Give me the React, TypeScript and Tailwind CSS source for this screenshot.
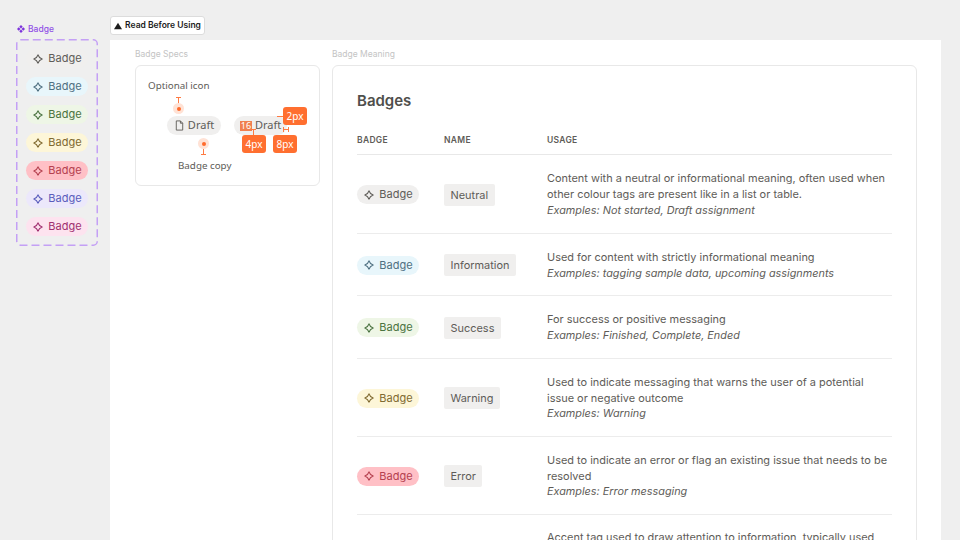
import React from "react";

type Tone = "neutral" | "info" | "success" | "warning" | "error" | "accent" | "pink";

const tones: Record<Tone, string> = {
    neutral: "bg-[#f0efee] text-[#5e5c58]",
    info: "bg-[#e8f6fb] text-[#4f7081]",
    success: "bg-[#eef6e6] text-[#4a7340]",
    warning: "bg-[#fdf6d8] text-[#806a30]",
    error: "bg-[#ffc0c6] text-[#b5404f]",
    accent: "bg-[#ece8fb] text-[#5a5dbc]",
    pink: "bg-[#fde3ef] text-[#a03070]",
};

const swatches: Tone[] = ["neutral", "info", "success", "warning", "error", "accent", "pink"];

const rows: { tone: Tone; name: string; usage: string[]; example: string; h: string }[] = [
    {
        tone: "neutral",
        name: "Neutral",
        usage: ["Content with a neutral or informational meaning, often used when", "other colour tags are present like in a list or table."],
        example: "Examples: Not started, Draft assignment",
        h: "h-[79px]",
    },
    {
        tone: "info",
        name: "Information",
        usage: ["Used for content with strictly informational meaning"],
        example: "Examples: tagging sample data, upcoming assignments",
        h: "h-[62px]",
    },
    {
        tone: "success",
        name: "Success",
        usage: ["For success or positive messaging"],
        example: "Examples: Finished, Complete, Ended",
        h: "h-[63px]",
    },
    {
        tone: "warning",
        name: "Warning",
        usage: ["Used to indicate messaging that warns the user of a potential", "issue or negative outcome"],
        example: "Examples: Warning",
        h: "h-[78px]",
    },
    {
        tone: "error",
        name: "Error",
        usage: ["Used to indicate an error or flag an existing issue that needs to be", "resolved"],
        example: "Examples: Error messaging",
        h: "h-[78px]",
    },
];

const Star = () => (
    <svg width="10" height="10" viewBox="0 0 12 12" fill="none" stroke="currentColor" strokeWidth="1.4" strokeLinejoin="round" className="shrink-0">
        <path d="M6 1 C6.8 3.5 8.5 5.2 11 6 C8.5 6.8 6.8 8.5 6 11 C5.2 8.5 3.5 6.8 1 6 C3.5 5.2 5.2 3.5 6 1Z" />
    </svg>
);

const Badge = ({ tone }: { tone: Tone }) => (
    <span className={`flex h-[19px] w-[62px] items-center justify-center gap-[5px] rounded-full pl-[1px] text-[11px] ${tones[tone]}`}>
        <Star />
        Badge
    </span>
);

const Tick = ({ className }: { className: string }) => (
    <div className={`absolute bg-[#ff7a42] ${className}`} />
);

const Tag = ({ children, className }: { children: React.ReactNode; className: string }) => (
    <div className={`absolute flex h-[18px] w-[24px] items-center justify-center rounded-[3px] bg-[#ff6f30] text-[10px] text-white ${className}`}>
        {children}
    </div>
);

const Dot = ({ className }: { className: string }) => (
    <div className={`absolute flex h-[11px] w-[11px] items-center justify-center rounded-full bg-[#ffe2d5] ${className}`}>
        <div className="h-[4px] w-[4px] rounded-full bg-[#ff6a2b]" />
    </div>
);

const SpecsCard = () => (
    <div className="relative h-[121px] w-[185px] rounded-[6px] border border-[#e8e8e8] font-['Noto_Sans',sans-serif] text-[9.8px] text-[#5e5c58]">
        <div className="absolute left-[12px] top-[13px]">Optional icon</div>
        <div className="absolute left-[42px] top-[93px]">Badge copy</div>
        <div className="flex gap-[13px] pl-[31px] pt-[50px]">
            <span className="flex h-[19px] w-[54px] items-center justify-center gap-[3px] rounded-full bg-[#f0efee] text-[11px]">
                <svg width="11" height="11" viewBox="0 0 12 12" fill="none" stroke="currentColor" strokeWidth="1" strokeLinejoin="round">
                    <path d="M2.5 1h4.5l2.5 2.5V11h-7zM7 1v2.5h2.5" />
                </svg>
                Draft
            </span>
            <span className="flex h-[19px] w-[53px] items-center gap-[3px] rounded-full bg-[#f0efee] pl-[6px] text-[11px]">
                <span className="flex h-[10px] w-[12px] items-center justify-center bg-[#f0804f] text-[9px] leading-[10px] text-white">16</span>
                Draft
            </span>
        </div>
        <Tick className="left-[42px] top-[31px] h-[10px] w-px" />
        <Tick className="left-[40px] top-[31px] h-px w-[5px]" />
        <Dot className="left-[37px] top-[37px]" />
        <Tick className="left-[67px] top-[77px] h-[11px] w-px" />
        <Tick className="left-[65px] top-[88px] h-px w-[5px]" />
        <Dot className="left-[62px] top-[72px]" />
        <Tag className="left-[147px] top-[41px]">2px</Tag>
        <Tag className="left-[106px] top-[69px]">4px</Tag>
        <Tag className="left-[137px] top-[69px]">8px</Tag>
        <Tick className="left-[141px] top-[50px] h-px w-[6px]" />
        <Tick className="left-[117px] top-[64px] h-[5px] w-px" />
        <Tick className="left-[115px] top-[63px] h-px w-[5px]" />
        <Tick className="left-[147px] top-[63px] h-px w-[6px]" />
        <Tick className="left-[147px] top-[61px] h-[5px] w-px" />
        <Tick className="left-[152px] top-[61px] h-[5px] w-px" />
    </div>
);

export default function App() {
    return (
        <div className="flex h-[540px] w-[960px] overflow-hidden bg-[#efefef] font-['Inter',sans-serif]">
            <div className="ml-[16px] mt-[23px] w-[82px] shrink-0">
                <div className="flex h-[12px] items-center gap-[3px] pl-[1px] text-[8.5px] font-medium text-[#9150e6]">
                    <svg width="8" height="8" viewBox="0 0 12 12" fill="#7c33dc">
                        <path d="M6 0l2.6 2.6L6 5.2 3.4 2.6zM2.6 3.4L5.2 6 2.6 8.6 0 6zM9.4 3.4L12 6 9.4 8.6 6.8 6zM6 6.8l2.6 2.6L6 12 3.4 9.4z" />
                    </svg>
                    Badge
                </div>
                <div className="relative mt-[4px] flex h-[207px] flex-col items-center gap-[9px] pt-[10px]">
                    <svg width="82" height="207" className="absolute left-0 top-0" fill="none" stroke="#c4a0f5" strokeWidth="1.5" strokeDasharray="8 4">
                        <rect x="0.75" y="0.75" width="80.5" height="205.5" rx="4" />
                    </svg>
                    {swatches.map((t) => (
                        <Badge key={t} tone={t} />
                    ))}
                </div>
            </div>
            <div className="ml-[12px] mt-[16px] w-[831px] shrink-0">
                <div className="flex h-[19px] w-[95px] items-center justify-center gap-[3px] rounded-[3px] border border-[#dcdcdc] bg-white text-[8.5px] font-semibold text-[#1c1c1c]">
                    <svg width="8" height="8" viewBox="0 0 12 12" fill="currentColor">
                        <path d="M6 1l6 10H0z" />
                    </svg>
                    Read Before Using
                </div>
                <div className="mt-[5px] flex h-[520px] gap-[12px] bg-white pl-[25px] pt-[9px]">
                    <div className="w-[185px] shrink-0">
                        <div className="h-[16px] text-[8.5px] leading-[10px] text-[#c4c4c4]">Badge Specs</div>
                        <SpecsCard />
                    </div>
                    <div className="w-[585px] shrink-0">
                        <div className="h-[16px] text-[8.5px] leading-[10px] text-[#c4c4c4]">Badge Meaning</div>
                        <div className="h-[600px] rounded-[6px] border border-[#e8e8e8] px-[24px] pt-[25px]">
                            <h2 className="text-[15px] font-semibold leading-[20px] text-[#4f4f4c]">Badges</h2>
                            <div className="mt-[24px] grid h-[20px] grid-cols-[87px_103px_1fr] border-b border-[#e8e8e8] text-[8.5px] font-semibold leading-[10px] tracking-[0.3px] text-[#5e5c58]">
                                <div>BADGE</div>
                                <div>NAME</div>
                                <div>USAGE</div>
                            </div>
                            {rows.map((r) => (
                                <div key={r.name} className={`grid grid-cols-[87px_103px_1fr] items-center border-b border-[#ececec] pt-[1px] ${r.h}`}>
                                    <Badge tone={r.tone} />
                                    <div className="flex">
                                        <span className="rounded-[2px] bg-[#f0efee] px-[6.5px] py-[3px] text-[10.95px] leading-[16px] text-[#5e5c58]">{r.name}</span>
                                    </div>
                                    <div className="pt-[1px] text-[10.95px] leading-[15.7px] text-[#5e5c58]">
                                        {r.usage.map((l) => (
                                            <div key={l}>{l}</div>
                                        ))}
                                        <div className="text-[10.85px] italic">{r.example}</div>
                                    </div>
                                </div>
                            ))}
                            <div className="grid grid-cols-[87px_103px_1fr] pt-[15px]">
                                <div />
                                <div />
                                <div className="text-[10.95px] leading-[15.7px] text-[#5e5c58]">Accent tag used to draw attention to information, typically used</div>
                            </div>
                        </div>
                    </div>
                </div>
            </div>
        </div>
    );
}
